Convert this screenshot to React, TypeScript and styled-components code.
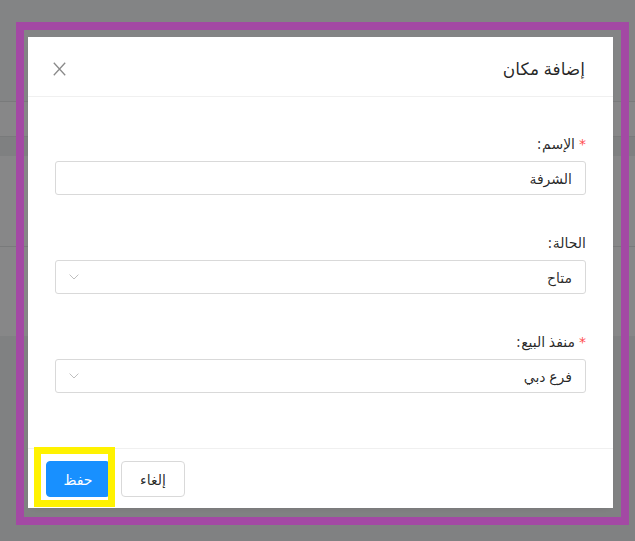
import styled, { createGlobalStyle } from "styled-components";

const GlobalStyle = createGlobalStyle`
	html, body {
		margin: 0;
		padding: 0;
	}
	body {
		font-family: "Segoe UI", Tahoma, "Noto Sans", "DejaVu Sans", sans-serif;
		-webkit-font-smoothing: antialiased;
	}
`;

const bands = [
	{ h: 101, color: "#838485", line: false },
	{ h: 35, color: "#878788", line: true },
	{ h: 20, color: "#7f8081", line: true },
	{ h: 90, color: "#878788", line: false },
	{ h: 90, color: "#878788", line: true },
	{ h: 205, color: "#808182", line: false },
];

const fields = [
	{ label: "الإسم", value: "الشرفة", required: true, select: false },
	{ label: "الحالة", value: "متاح", required: false, select: true },
	{ label: "منفذ البيع", value: "فرع دبي", required: true, select: true },
];

export default function App() {
	return (
		<Page>
			<GlobalStyle />
			<Backdrop>
				{bands.map((b, i) => (
					<Band key={i} $h={b.h} $color={b.color} $line={b.line} />
				))}
			</Backdrop>

			<PurpleMark />

			<Modal dir="rtl">
				<Header>
					<Title>إضافة مكان</Title>
					<CloseBtn aria-label="close">
						<svg width="13" height="14" viewBox="0 0 13 14">
							<path d="M0.8 0.8 L12.2 13.2 M12.2 0.8 L0.8 13.2" stroke="#8a8a8a" strokeWidth="1.3" fill="none" />
						</svg>
					</CloseBtn>
				</Header>
				<Body>
					{fields.map((f) => (
						<Field key={f.label}>
							<Label>
								{f.required && <Star>*</Star>}
								{f.label}
								<Colon>:</Colon>
							</Label>
							<Control>
								<Value>{f.value}</Value>
								{f.select && (
									<svg width="10" height="6" viewBox="0 0 10 6">
										<path d="M0.6 0.6 L5 5 L9.4 0.6" stroke="#bfbfbf" strokeWidth="1" fill="none" />
									</svg>
								)}
							</Control>
						</Field>
					))}
				</Body>
				<Footer>
					<CancelBtn>إلغاء</CancelBtn>
					<SaveBtn>حفظ</SaveBtn>
				</Footer>
			</Modal>

			<YellowMark />
		</Page>
	);
}

const Page = styled.div`
	position: relative;
	width: 635px;
	height: 541px;
	overflow: hidden;
	background: #858586;
`;

const Backdrop = styled.div`
	display: flex;
	flex-direction: column;
	height: 100%;
`;

const Band = styled.div<{ $h: number; $color: string; $line: boolean }>`
	flex: 0 0 ${(p) => p.$h}px;
	background: ${(p) => p.$color};
	box-sizing: border-box;
	border-top: ${(p) => (p.$line ? "1px solid #797a7b" : "none")};
`;

const PurpleMark = styled.div`
	position: absolute;
	left: 16px;
	top: 22px;
	width: 613px;
	height: 503px;
	box-sizing: border-box;
	border: 8px solid #a349a4;
`;

const YellowMark = styled.div`
	position: absolute;
	left: 34px;
	top: 447px;
	width: 81px;
	height: 60px;
	box-sizing: border-box;
	border: 7px solid #fff200;
`;

const Modal = styled.div`
	position: absolute;
	left: 28px;
	top: 37px;
	width: 585px;
	height: 471px;
	background: #fff;
	display: flex;
	flex-direction: column;
	box-shadow: 0 3px 6px -4px rgba(0, 0, 0, 0.12);
`;

const Header = styled.div`
	height: 60px;
	flex: 0 0 auto;
	display: flex;
	align-items: center;
	justify-content: space-between;
	padding: 4px 28px 0 25px;
	box-sizing: border-box;
	border-bottom: 1px solid #f0f0f0;
`;

const Title = styled.div`
	font-size: 17px;
	font-weight: 400;
	color: rgba(0, 0, 0, 0.85);
	line-height: 22px;
`;

const CloseBtn = styled.button`
	border: none;
	background: transparent;
	padding: 0;
	display: flex;
	cursor: pointer;
`;

const Body = styled.div`
	display: flex;
	flex-direction: column;
	gap: 37px;
	padding: 36px 27px 55px 27px;
`;

const Field = styled.div`
	display: flex;
	flex-direction: column;
	gap: 6px;
`;

const Label = styled.label`
	font-size: 14px;
	line-height: 22px;
	height: 22px;
	color: rgba(0, 0, 0, 0.85);
	display: flex;
	align-items: center;
`;

const Star = styled.span`
	color: #ff4d4f;
	margin-left: 4px;
	font-family: SimSun, "DejaVu Sans", sans-serif;
	font-size: 14px;
`;

const Colon = styled.span`
	margin-right: 1px;
`;

const Control = styled.div`
	height: 34px;
	box-sizing: border-box;
	border: 1px solid #d9d9d9;
	border-radius: 3px;
	display: flex;
	align-items: center;
	justify-content: space-between;
	padding: 0 13px 0 13px;
`;

const Value = styled.span`
	font-size: 14px;
	color: rgba(0, 0, 0, 0.85);
`;

const Footer = styled.div`
	border-top: 1px solid #f0f0f0;
	display: flex;
	justify-content: flex-end;
	gap: 11px;
	padding: 12px 18px 10px;
`;

const btn = `
	height: 36px;
	min-width: 64px;
	padding: 0 15px;
	box-sizing: border-box;
	border-radius: 4px;
	font-size: 14px;
	font-family: inherit;
	cursor: pointer;
`;

const CancelBtn = styled.button`
	${btn}
	background: #fff;
	color: rgba(0, 0, 0, 0.85);
	border: 1px solid #d9d9d9;
`;

const SaveBtn = styled.button`
	${btn}
	background: #1890ff;
	color: #fff;
	border: 1px solid #1890ff;
`;
